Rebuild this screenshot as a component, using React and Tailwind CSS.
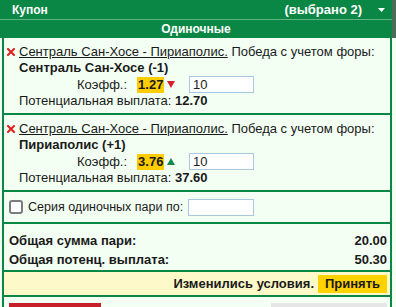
import React from "react";

const font = { fontFamily: '"Liberation Sans", Arial, sans-serif' };

function RedX() {
  return (
    <svg width="8" height="8" viewBox="0 0 8 8" className="shrink-0">
      <path d="M1 1 L7 7 M7 1 L1 7" stroke="#e0201b" strokeWidth="2" strokeLinecap="square" />
    </svg>
  );
}

function Tri({ up }) {
  return up ? (
    <svg width="8" height="8" viewBox="0 0 8 8">
      <path d="M0 7 L4 0 L8 7 Z" fill="#138a4c" />
    </svg>
  ) : (
    <svg width="8" height="8" viewBox="0 0 8 8">
      <path d="M0 0 L8 0 L4 7 Z" fill="#d3202e" />
    </svg>
  );
}

function Item({ pick, odds, up, payout }) {
  return (
    <div className="pt-[6px] pb-[4px] pl-[3px] pr-[5px] text-[13px] text-[#1a1a1a]">
      <div className="flex items-center h-[16px] leading-[16px]">
        <span className="w-[12px] flex items-center"><RedX /></span>
        <span>
          <span className="underline">Сентраль Сан-Хосе - Пириаполис.</span> Победа с учетом форы:
        </span>
      </div>
      <div className="h-[16px] leading-[16px] pl-[12px] font-bold">{pick}</div>
      <div className="flex items-center h-[17px]">
        <div className="w-[182px] shrink-0 flex items-center pl-[70px]">
          <span className="shrink-0 whitespace-nowrap">Коэфф.:</span>
          <span className="ml-[10px] bg-[#ffcc00] font-bold px-[1px] leading-[16px]">{odds}</span>
          <span className="ml-[3px] flex items-center"><Tri up={up} /></span>
        </div>
        <div className="w-[65px] h-[17px] border border-[#a8c8e0] bg-white text-[13px] leading-[15px] pl-[3px]">10</div>
      </div>
      <div className="h-[16px] leading-[16px] pl-[12px]">
        Потенциальная выплата: <span className="font-bold">{payout}</span>
      </div>
    </div>
  );
}

export default function App() {
  return (
    <div style={font} className="w-[396px] h-[307px] overflow-hidden bg-[#f3fff3] relative">
      <div className="flex">
        <div className="w-[392px]">
          <div className="h-[20px] bg-[#0a8745] flex items-center text-white font-bold text-[13px] pl-[12px] pr-[7px] border-b border-[#5cb47f]">
            <span className="flex-1 text-[12px]">Купон</span>
            <span>(выбрано 2)</span>
            <svg width="7" height="4" viewBox="0 0 7 4" className="ml-[16px]">
              <path d="M0 0 L7 0 L3.5 4 Z" fill="#ffffff" />
            </svg>
          </div>
          <div className="h-[18px] bg-[#0a8745] text-white font-bold text-[12px] flex items-center justify-center">Одиночные</div>
        </div>
        <div className="w-[4px] h-[38px] bg-[#4c6b58]" />
      </div>
      <div className="ml-[2px] w-[390px] border-l-2 border-r-2 border-[#0a8745]">
        <Item pick="Сентраль Сан-Хосе (-1)" odds="1.27" up={false} payout="12.70" />
        <div className="h-[2px] bg-[#0a8745]" />
        <Item pick="Пириаполис (+1)" odds="3.76" up={true} payout="37.60" />
        <div className="h-[2px] bg-[#0a8745]" />
        <div className="h-[30px] flex items-center pl-[5px] text-[#1a1a1a]">
          <span className="w-[14px] h-[14px] shrink-0 border-2 border-[#7b7b80] rounded-[3px] bg-white mr-[5px]" />
          <span className="w-[160px] shrink-0 whitespace-nowrap text-[12.5px]">Серия одиночных пари по:</span>
          <span className="w-[66px] h-[17px] border border-[#a8c8e0] bg-white" />
        </div>
        <div className="h-[2px] bg-[#0a8745]" />
        <div className="pt-[7px] pb-[1px] pl-[5px] pr-[3px] text-[13px] font-bold text-[#1a1a1a]">
          <div className="flex justify-between h-[19px] leading-[19px]"><span>Общая сумма пари:</span><span>20.00</span></div>
          <div className="flex justify-between h-[19px] leading-[19px]"><span>Общая потенц. выплата:</span><span>50.30</span></div>
        </div>
        <div className="h-[2px] bg-[#0a8745]" />
        <div className="h-[23px] bg-[#fdf9c9] flex items-center justify-end pr-[3px] text-[13px] font-bold text-[#1a1a1a]">
          <span className="mr-[4px]">Изменились условия.</span>
          <span className="h-[18px] w-[69px] bg-[#ffd200] flex items-center justify-center font-bold">Принять</span>
        </div>
        <div className="h-[2px] bg-[#0a8745]" />
        <div className="h-[12px] flex justify-between pl-[5px] pr-[3px] pt-[6px]">
          <div className="w-[92px] h-[10px] bg-[#c8202a]" />
          <div className="w-[116px] h-[10px] bg-[#e6e6e6]" />
        </div>
      </div>
    </div>
  );
}
